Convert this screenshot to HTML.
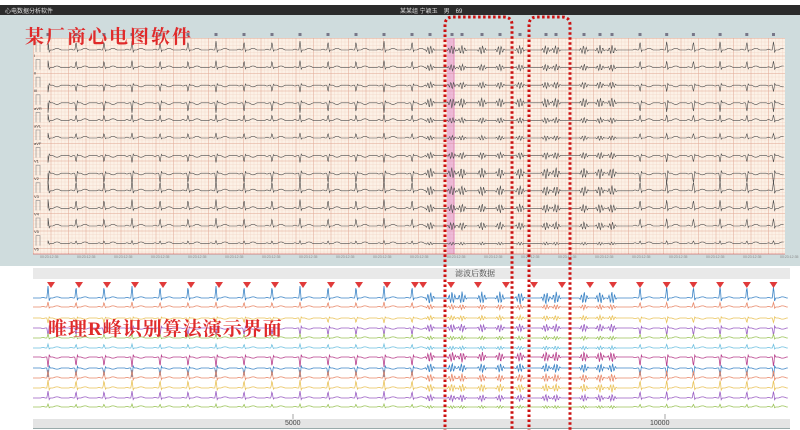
<!DOCTYPE html>
<html><head><meta charset="utf-8">
<style>
html,body{margin:0;padding:0;width:800px;height:430px;overflow:hidden;background:#fff;font-family:"Liberation Sans","Noto Sans CJK SC",sans-serif;}
#wrap{position:relative;width:800px;height:430px;}
.abs{position:absolute;}
#topbar{left:0;top:5px;width:800px;height:10px;background:#2b2b2b;}
#panel{left:0;top:15px;width:800px;height:251px;background:#cfdcdd;}
#paper{left:33px;top:38px;width:752px;height:216px;background-color:#fcf1e6;
background-image:
linear-gradient(to right,rgba(225,170,150,.45) 1px,transparent 1px),
linear-gradient(to bottom,rgba(225,170,150,.45) 1px,transparent 1px),
linear-gradient(to right,rgba(240,210,195,.35) 1px,transparent 1px),
linear-gradient(to bottom,rgba(240,210,195,.35) 1px,transparent 1px);
background-size:17.5px 17.5px,17.5px 17.5px,3.5px 3.5px,3.5px 3.5px;}
#strip{left:33px;top:268px;width:757px;height:11px;background:#e9e9e9;}
#ruler{left:33px;top:419px;width:757px;height:9px;background:#e4e4e4;border-bottom:1px solid #9aa;}
.t1{left:25px;top:22px;font-family:"Liberation Serif","Noto Serif CJK SC",serif;font-size:19px;color:#e02a2a;letter-spacing:2px;font-weight:bold;}
.t2{left:48px;top:314px;font-family:"Liberation Serif","Noto Serif CJK SC",serif;font-size:19px;color:#e02a2a;letter-spacing:1px;font-weight:bold;}
svg{position:absolute;left:0;top:0;}
</style></head><body><div id="wrap">
<div id="topbar" class="abs"></div>
<div class="abs" style="left:5px;top:6px;font-size:6px;color:#ddd;">心电数据分析软件</div>
<div class="abs" style="left:400px;top:6px;font-size:6px;color:#ddd;">某某组 宁颖玉　男　69</div>
<div id="panel" class="abs"></div>
<div id="paper" class="abs"></div>
<div id="strip" class="abs"></div>
<div class="abs" style="left:455px;top:268px;font-size:8px;color:#444;font-family:'Liberation Serif','Noto Serif CJK SC',serif;">滤波后数据</div>
<div id="ruler" class="abs"></div>
<div class="abs" style="left:285px;top:420px;font-size:7px;color:#444;">5000</div>
<div class="abs" style="left:650px;top:420px;font-size:7px;color:#444;">10000</div>
<svg id="s" width="800" height="430"></svg>
<div class="abs t1">某厂商心电图软件</div>
<div class="abs t2">唯理R峰识别算法演示界面</div>
</div>
<script>
var s=document.getElementById('s'),NS='http://www.w3.org/2000/svg';
function el(t,a){var e=document.createElementNS(NS,t);for(var k in a)e.setAttribute(k,a[k]);s.appendChild(e);return e;}
var seed=7;function rnd(){seed=(seed*16807)%2147483647;return seed/2147483647;}
var beats=[];for(var x=48;x<425;x+=28)beats.push(x);
var ch=[430,452,462,482,500,520,546,556,584,600,612];
for(var x=640;x<785;x+=26.7)beats.push(x);
el('rect',{x:447,y:38,width:8,height:216,fill:'rgba(220,120,200,0.45)'});
function trace(y0,amp,x0,x1,col,sw,seedv,sc){
 seed=seedv;var d='M'+x0+' '+y0;var sg=amp<0?-1:1;
 var ph=[];for(var i=0;i<ch.length;i++)ph.push(rnd()*6);
 for(var x=x0;x<=x1;x+=0.6){
  var y=y0;
  for(var i=0;i<beats.length;i++){var b=beats[i],dx=x-b;
   if(Math.abs(dx)<1.1)y-=amp*(1-Math.abs(dx)/1.1);
   else if(dx>1.1&&dx<2.2)y+=amp*0.25*(1-(dx-1.1)/1.1);
   if(dx>-7&&dx<-3)y-=0.8*sc*Math.sin((dx+7)/4*Math.PI)*sg;
   if(dx>5&&dx<13)y-=1.6*sc*Math.sin((dx-5)/8*Math.PI)*sg;
  }
  for(var i=0;i<ch.length;i++){var dx=x-ch[i];
   if(Math.abs(dx)<5){var env=1-Math.abs(dx)/5;y-=Math.abs(amp)*0.55*env*Math.sin(dx*2.2+ph[i]);}
  }
  d+=' L'+x.toFixed(1)+' '+y.toFixed(1);
 }
 el('path',{d:d,fill:'none',stroke:col,'stroke-width':sw});
}
var amps=[9,7,-7,-10,6,5,-7,-11,10,9,8,3];
var labs=['I','II','III','aVR','aVL','aVF','V1','V2','V3','V4','V5','V6'];
for(var i=0;i<12;i++){var y=50+i*17.6;
 trace(y,amps[i],48,784,'#4a4a4a',0.6,11+i,1);
 el('path',{d:'M36 '+(y+2)+' V'+(y-8)+' H40 V'+(y+2),fill:'none',stroke:'#888','stroke-width':0.6});
 var t=el('text',{x:34,y:y+7,'font-size':4,fill:'#333'});t.textContent=labs[i];
}
beats.concat(ch).forEach(function(b){el('rect',{x:b-1.5,y:33,width:3,height:3,fill:'#778'});});
for(var x=40;x<785;x+=37){var t=el('text',{x:x,y:258,'font-size':3.5,fill:'#888'});t.textContent='00:23:12:35';}
el('line',{x1:33,y1:254,x2:785,y2:254,stroke:'#c33','stroke-width':0.6});
var cols=['#3d85c6','#e8896a','#e9c35a','#9a5fc4','#9cc45a','#6fc0e0','#b8408c','#3d85c6','#e8896a','#e9c35a','#9a5fc4','#9cc45a'];
var ys=[298,307,318,328,338,348,357,368,378,388,398,407];
var am2=[12,5,-5,-8,4,4,-10,-9,8,8,7,3];
for(var i=0;i<12;i++)trace(ys[i],am2[i],33,788,cols[i],0.8,40+i,0.7);
var mk=[];for(var x=51;x<425;x+=28)mk.push(x);[423,451,478,506,534,562,590,613].forEach(function(v){mk.push(v)});for(var x=640;x<785;x+=26.7)mk.push(x);
mk.forEach(function(b){el('path',{d:'M'+(b-4)+' 282 H'+(b+4)+' L'+b+' 288 Z',fill:'#e03a3a'});});
el('line',{x1:293,y1:414,x2:293,y2:419,stroke:'#666','stroke-width':0.6});
el('line',{x1:665,y1:414,x2:665,y2:419,stroke:'#666','stroke-width':0.6});
[[445,17,67],[529,17,41]].forEach(function(r){
 el('path',{d:'M'+r[0]+' 432 V'+(r[1]+8)+' Q'+r[0]+' '+r[1]+' '+(r[0]+8)+' '+r[1]+' H'+(r[0]+r[2]-8)+' Q'+(r[0]+r[2])+' '+r[1]+' '+(r[0]+r[2])+' '+(r[1]+8)+' V432',fill:'none',stroke:'#cc1010','stroke-width':3,'stroke-dasharray':'2.5 2.5'});
});
</script>
</body></html>
